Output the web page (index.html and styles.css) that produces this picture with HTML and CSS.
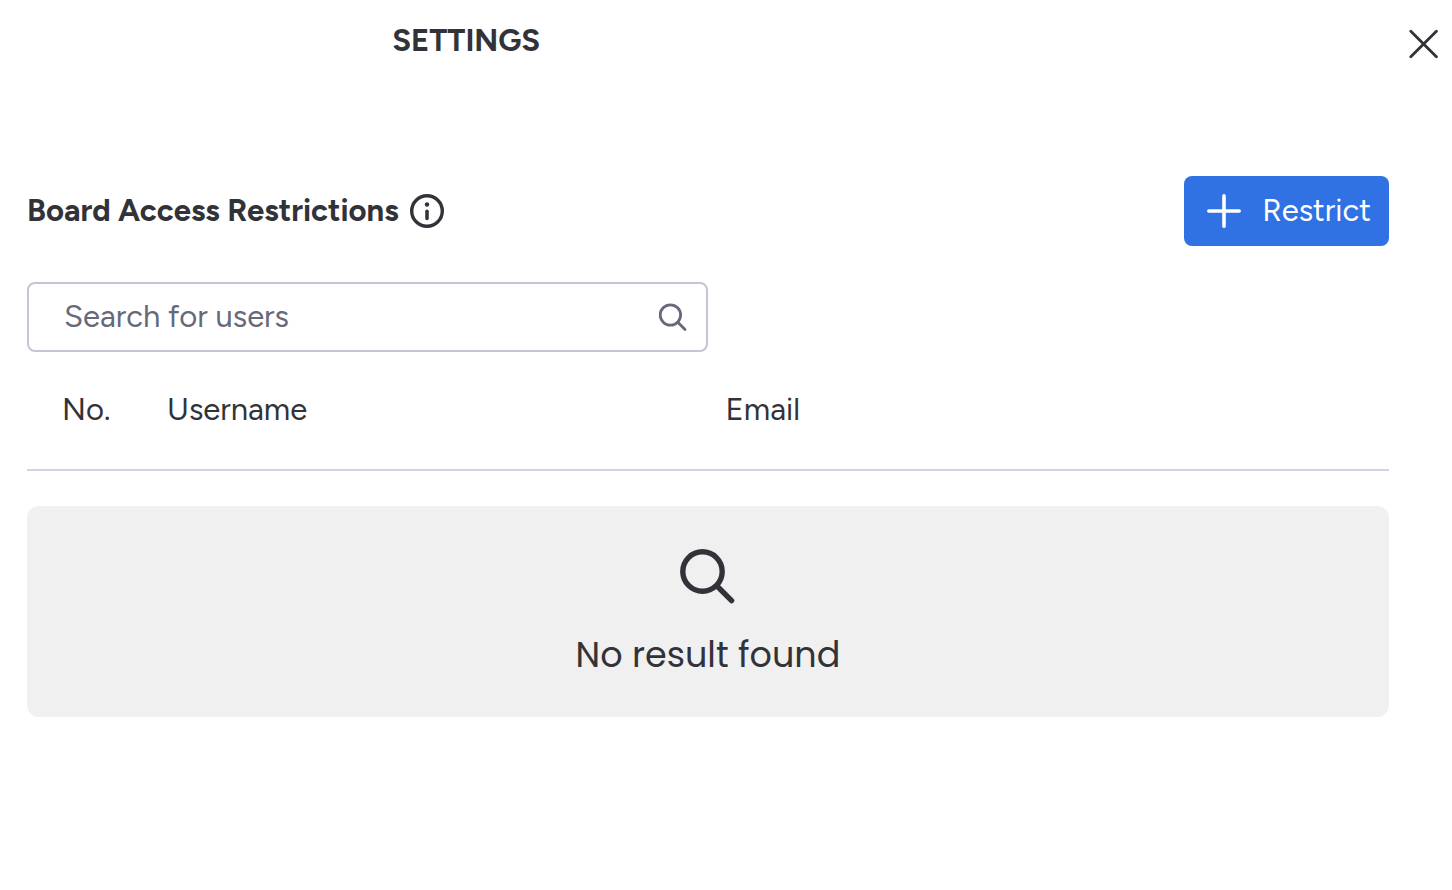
FILE: index.html
```html
<!DOCTYPE html>
<html lang="en">
<head>
<meta charset="utf-8">
<title>Settings</title>
<link rel="stylesheet" href="styles.css">
</head>
<body>
<header class="topbar">
  <h1 class="topbar-title">SETTINGS</h1>
  <button class="close" type="button" aria-label="Close">
    <svg width="30" height="30" viewBox="0 0 30 30" fill="none" stroke="currentColor" stroke-width="2.8" stroke-linecap="round"><path d="M2.8 2.2 28.4 27.8M28.4 2.2 2.8 27.8"/></svg>
  </button>
</header>
<main class="panel">
  <div class="panel-head">
    <h2 class="panel-title">Board Access Restrictions</h2>
    <svg class="info" width="34" height="34" viewBox="0 0 34 34" fill="none" stroke="currentColor" stroke-linecap="round"><circle cx="17" cy="17" r="15.3" stroke-width="3.4"/><path d="M17 17.2V24.4" stroke-width="3.5"/><circle cx="17" cy="10.5" r="2.2" fill="currentColor" stroke="none"/></svg>
    <button class="restrict" type="button">
      <svg width="34" height="34" viewBox="0 0 34 34" fill="none" stroke="currentColor" stroke-width="3.6" stroke-linecap="round"><path d="M17 1.8V32.2M1.8 17H32.2"/></svg>
      <span>Restrict</span>
    </button>
  </div>
  <div class="search">
    <input class="search-input" type="text" placeholder="Search for users" aria-label="Search for users">
    <svg width="28" height="28" viewBox="0 0 28 28" fill="none" stroke="currentColor" stroke-width="2.8" stroke-linecap="round"><circle cx="11.4" cy="12" r="10.2"/><path d="M18.8 19.2 26 26.4"/></svg>
  </div>
  <table class="users">
    <thead>
      <tr><th class="col-no" scope="col">No.</th><th class="col-name" scope="col">Username</th><th scope="col">Email</th></tr>
    </thead>
  </table>
  <section class="empty">
    <svg width="56" height="56" viewBox="0 0 56 56" fill="none" stroke="currentColor" stroke-width="5.4" stroke-linecap="round"><circle cx="22.5" cy="23.5" r="19.7"/><path d="M37 38 51.6 52.6"/></svg>
    <p class="empty-text">No result found</p>
  </section>
</main>
</body>
</html>
```
FILE: styles.css
```css
* {
  box-sizing: border-box;
}

body {
  margin: 0;
  background: #fff;
  color: #323338;
  font-family: Figtree, Lato, sans-serif;
  font-size: 31px;
  line-height: 40px;
}

h1,
h2,
p {
  margin: 0;
}

svg {
  display: block;
  flex: none;
}

button,
input {
  font: inherit;
}

.topbar {
  display: flex;
  justify-content: space-between;
  align-items: flex-start;
  padding: 21px 14px 0 0;
}

.topbar-title {
  width: 64%;
  padding-left: 12px;
  font-size: 31px;
  text-align: center;
}

.close {
  padding: 0;
  margin-top: 8px;
  border: 0;
  background: none;
  color: inherit;
}

.panel {
  padding: 115px 63px 0 27px;
}

.panel-head {
  display: flex;
  align-items: center;
  gap: 11px;
}

.panel-title {
  font-size: 31px;
}

.restrict {
  display: flex;
  align-items: center;
  gap: 21px;
  height: 70px;
  margin-left: auto;
  padding: 0 18px 0 23px;
  border: 0;
  border-radius: 8px;
  background: #3072e3;
  color: #fff;
}

.search {
  display: flex;
  align-items: center;
  width: 50%;
  height: 70px;
  margin-top: 36px;
  padding: 0 19px 0 35px;
  border: 2px solid #c3c6d4;
  border-radius: 8px;
  color: #676879;
}

.search-input {
  flex: 1;
  min-width: 0;
  padding: 0;
  border: 0;
  outline: 0;
  background: none;
  color: inherit;
}

.search-input::placeholder {
  color: inherit;
  opacity: 1;
}

.users {
  width: 100%;
  margin-top: 16px;
  border-collapse: collapse;
  table-layout: fixed;
}

.users th {
  height: 102px;
  padding: 0 0 18px;
  border-bottom: 2px solid #d0d4e4;
  font-weight: 400;
  text-align: left;
}

.users .col-no {
  width: 140px;
  padding-left: 35px;
}

.users .col-name {
  width: 41%;
}

.empty {
  display: flex;
  flex-direction: column;
  align-items: center;
  gap: 27px;
  margin-top: 35px;
  padding: 42px 0 38px;
  border-radius: 12px;
  background: #f0f0f0;
}

.empty-text {
  font-family: Poppins, Figtree, Lato, sans-serif;
  font-size: 35px;
  line-height: 48px;
}
```
